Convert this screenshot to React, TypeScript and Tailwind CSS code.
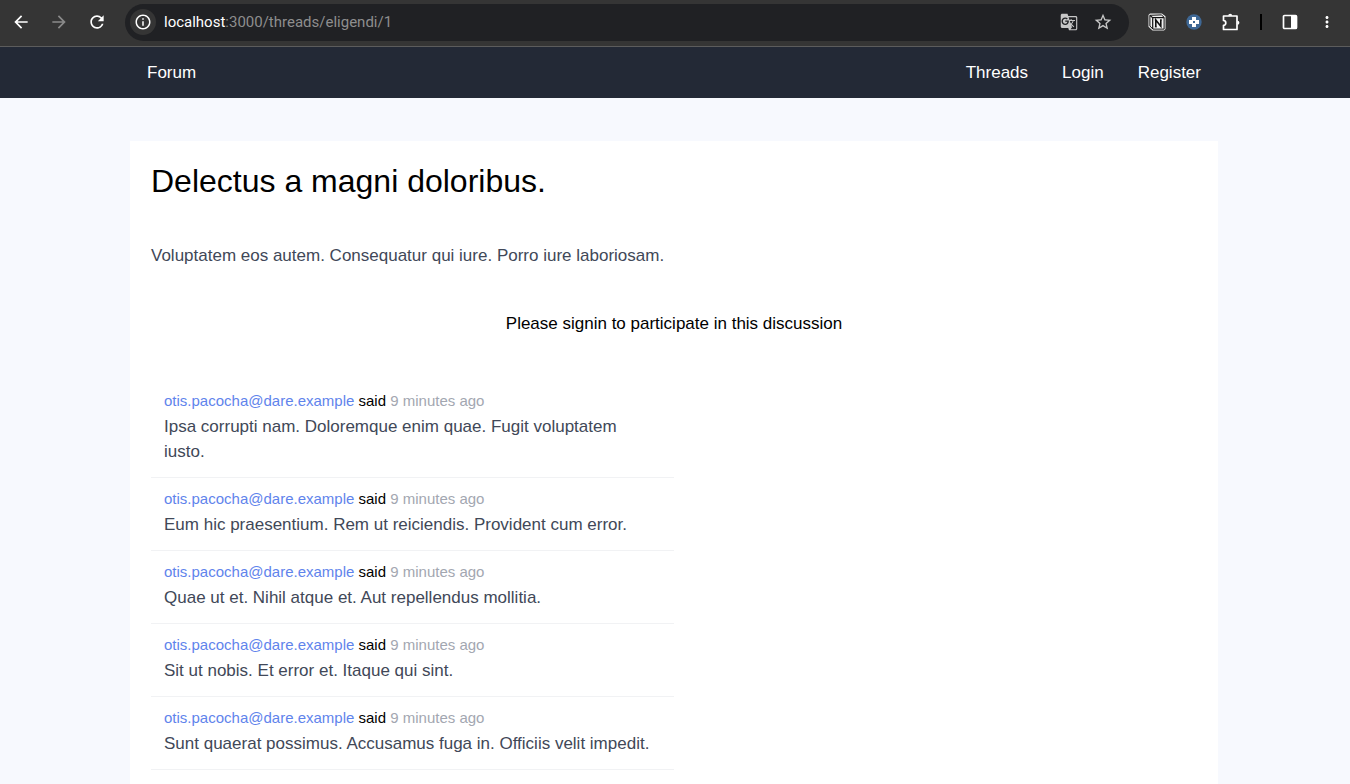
import React from "react";
import {
  MdArrowBack,
  MdArrowForward,
  MdGTranslate,
  MdMoreVert,
  MdOutlineInfo,
  MdRefresh,
  MdStarBorder,
} from "react-icons/md";

type Reply = { id: number; author: string; when: string; body: string };

const replies: Reply[] = [
  "Ipsa corrupti nam. Doloremque enim quae. Fugit voluptatem iusto.",
  "Eum hic praesentium. Rem ut reiciendis. Provident cum error.",
  "Quae ut et. Nihil atque et. Aut repellendus mollitia.",
  "Sit ut nobis. Et error et. Itaque qui sint.",
  "Sunt quaerat possimus. Accusamus fuga in. Officiis velit impedit.",
].map((body, index) => ({
  id: index + 1,
  author: "otis.pacocha@dare.example",
  when: "9 minutes ago",
  body,
}));

function NotionIcon() {
  return (
    <svg viewBox="0 0 18 18" className="size-[18px]" aria-hidden="true">
      <path d="M.5 2 2 .5h11.800L17.500 3.300V16L16 17.500H4.500L.5 13.800z" fill="#f0f0f0" />
      <path d="M1.900 2.300 13.300 1.900l2.800 2.300v11.900H4.900L1.900 13z" fill="#f0f0f0" stroke="#111" strokeWidth="1" strokeLinejoin="round" />
      <path d="M2 2.400 4.700 4.700v11.200M4.700 4.600h11.200" fill="none" stroke="#111" strokeWidth="1.200" />
      <path d="M7.800 14V7l5 6.200V6.600" fill="none" stroke="#111" strokeWidth="1.600" />
      <path d="M6.700 7h1.600M12 7h1.900M6.800 14h2" stroke="#111" strokeWidth=".8" />
    </svg>
  );
}

function CrossIcon() {
  return (
    <svg viewBox="0 0 16 16" className="size-4" aria-hidden="true">
      <circle cx="8" cy="8" r="7.700" fill="#3f6895" />
      <path d="M6 3h4v3h3v4h-3v3H6v-3H3V6h3z" fill="#fff" />
      <rect x="7" y="7" width="2" height="2" fill="#3f6895" />
    </svg>
  );
}

function PuzzleIcon() {
  return (
    <svg viewBox="0 0 18 18" className="size-[18px]" fill="none" aria-hidden="true">
      <path
        d="M1.500 3h13.500v13.500H1.500v-4.200c1.400 0 2.300-1 2.300-2.400S2.900 7.500 1.500 7.500z"
        stroke="#fff"
        strokeWidth="1.700"
        strokeLinejoin="round"
      />
      <path d="M6.200 2.800a2 2 0 0 1 4 0zM15.400 7.700a2 2 0 0 1 0 4z" fill="#fff" />
    </svg>
  );
}

function SidePanelIcon() {
  return (
    <svg viewBox="0 0 16 16" className="size-4" aria-hidden="true">
      <rect x="1.500" y="1.500" width="13" height="13" rx="1" fill="none" stroke="#fff" strokeWidth="1.700" />
      <path d="M9 1.500h5.500v13H9z" fill="#fff" />
    </svg>
  );
}

function BrowserBar() {
  return (
    <div className="flex h-[47px] shrink-0 items-center border-b border-[#5c5c5c] bg-[#353535] pb-px pl-[11px] pr-3.5 text-white">
      <div className="flex items-center gap-[18px] pb-0.5 pr-[18px]">
        <button type="button" aria-label="Back"><MdArrowBack className="size-5" /></button>
        <button type="button" aria-label="Forward"><MdArrowForward className="size-5 text-[#8a8a8a]" /></button>
        <button type="button" aria-label="Reload"><MdRefresh className="size-5" /></button>
      </div>
      <div className="flex h-[37px] flex-1 items-center rounded-full bg-[#202124] pb-0.5 pl-[5px] pr-4">
        <button
          type="button"
          aria-label="Site information"
          className="flex size-[26px] items-center justify-center rounded-full bg-[#353535]"
        >
          <MdOutlineInfo className="size-[18px]" />
        </button>
        <p className="flex-1 pl-2 font-['Roboto',sans-serif] text-[15px] leading-5 text-[#8e8e8e]">
          <span className="text-white">localhost</span>:3000/threads/eligendi/1
        </p>
        <div className="flex items-center gap-[15px] text-[#c7c7c7]">
          <button type="button" aria-label="Translate"><MdGTranslate className="size-[18px]" /></button>
          <button type="button" aria-label="Bookmark"><MdStarBorder className="size-5" /></button>
        </div>
      </div>
      <div className="flex items-center gap-5 pb-0.5 pl-[19px]">
        <button type="button" aria-label="Notion"><NotionIcon /></button>
        <button type="button" aria-label="Extension"><CrossIcon /></button>
        <button type="button" aria-label="Extensions"><PuzzleIcon /></button>
        <span className="h-4 w-0.5 bg-black" />
        <button type="button" aria-label="Side panel"><SidePanelIcon /></button>
        <button type="button" aria-label="Menu"><MdMoreVert className="size-[18px]" /></button>
      </div>
    </div>
  );
}

function SiteNav() {
  return (
    <header className="bg-[#232936] pr-0.5 text-white">
      <nav className="mx-auto flex max-w-[1088px] items-center justify-between px-[17px] py-[13px] leading-[25px]">
        <a href="#forum">Forum</a>
        <div className="flex gap-[34px]">
          <a href="#threads">Threads</a>
          <a href="#login">Login</a>
          <a href="#register">Register</a>
        </div>
      </nav>
    </header>
  );
}

function ReplyItem({ reply }: { reply: Reply }) {
  return (
    <li className="border-b border-[#f1f2f4] pb-[13px] pl-[13px] pr-4 pt-2.5">
      <p className="mb-0.5 text-[15px] leading-[22px]">
        <a href="#profile" className="text-[#5f84ec]">{reply.author}</a> said{" "}
        <span className="text-[#a3a7b1]">{reply.when}</span>
      </p>
      <p className="leading-[25px] text-[#414858]">{reply.body}</p>
    </li>
  );
}

export default function App() {
  return (
    <div className="flex h-screen flex-col overflow-hidden bg-[#f7f9fe] font-['Liberation_Sans',Arial,sans-serif] text-[17px] text-black">
      <BrowserBar />
      <SiteNav />
      <main className="flex flex-1 pr-0.5 pt-[43px]">
        <article className="mx-auto w-full max-w-[1088px] bg-white p-[21px]">
          <h1 className="text-[32px] leading-[38px]">Delectus a magni doloribus.</h1>
          <p className="mt-[43px] leading-[25px] text-[#414858]">
            Voluptatem eos autem. Consequatur qui iure. Porro iure laboriosam.
          </p>
          <p className="mt-[43px] text-center leading-[25px]">Please signin to participate in this discussion</p>
          <ul className="mt-11 w-1/2">
            {replies.map((reply) => (
              <ReplyItem key={reply.id} reply={reply} />
            ))}
          </ul>
        </article>
      </main>
    </div>
  );
}
